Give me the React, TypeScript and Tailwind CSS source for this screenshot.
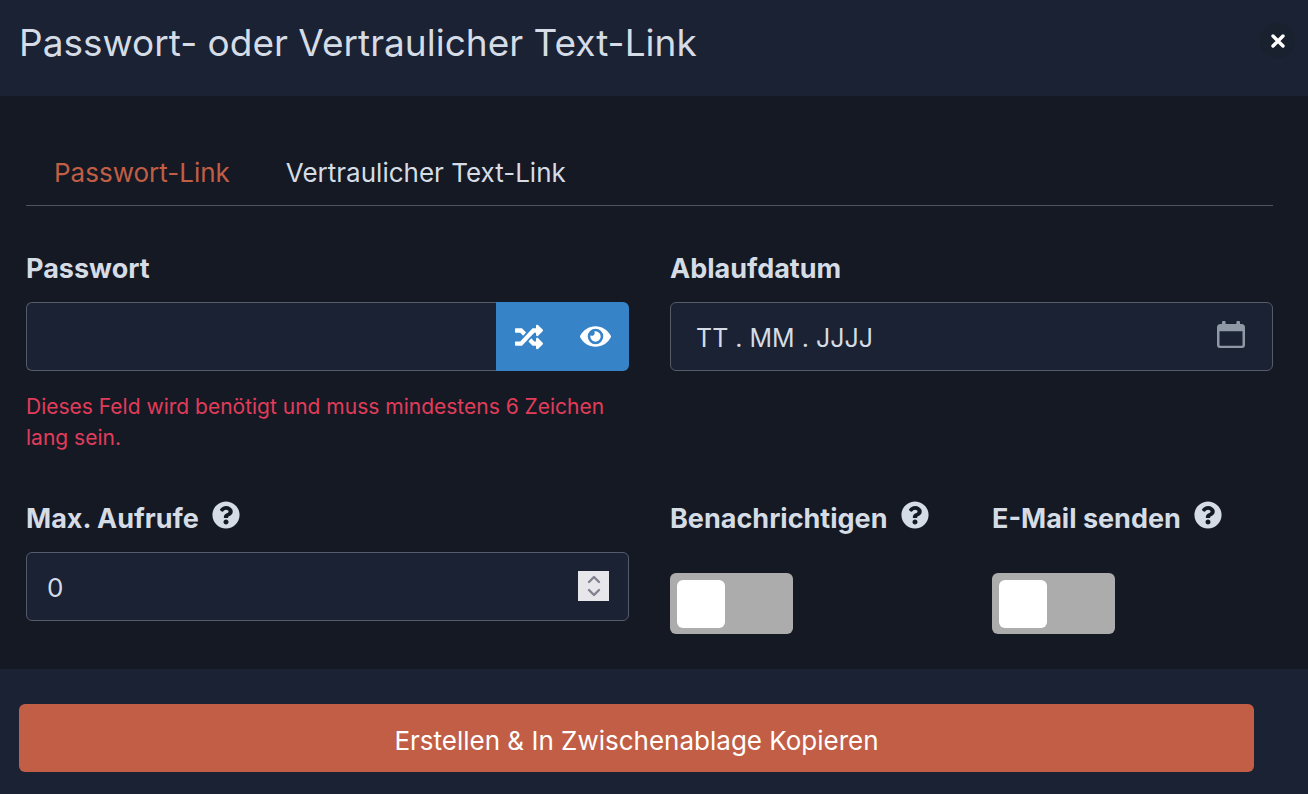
import React, { useState } from 'react'
import { FaEye, FaQuestionCircle, FaRandom } from 'react-icons/fa'

const tabs = [
    { id: 'password', label: 'Passwort-Link' },
    { id: 'text', label: 'Vertraulicher Text-Link' },
]

const CalendarIcon = () => (
    <svg width="28" height="28" viewBox="0 0 28 28" fill="none" aria-hidden="true">
        <path
            fillRule="evenodd"
            clipRule="evenodd"
            d="M5 1.5a1.5 1.5 0 0 1 3.6 0V3h10.8V1.5a1.5 1.5 0 0 1 3.6 0V3h1.5A3.5 3.5 0 0 1 28 6.5V24A3 3 0 0 1 25 27H3A3 3 0 0 1 0 24V6.5A3.5 3.5 0 0 1 3.5 3H5zM2.5 10.300V24a.8.8 0 0 0 .8.8H24.700a.8.8 0 0 0 .8-.8V10.300z"
            fill="#8e99a5"
        />
    </svg>
)

const Help = ({ label }: { label: string }) => (
    <button type="button" aria-label={label} className="text-[#d5dce5]">
        <FaQuestionCircle size={28} />
    </button>
)

const Toggle = ({ id }: { id: string }) => (
    <label className="block w-fit cursor-pointer">
        <input id={id} type="checkbox" role="switch" className="peer sr-only" />
        <span className="flex w-[123px] rounded-md bg-[#acacac] p-[7px] pb-[6px] peer-checked:justify-end peer-checked:bg-[#3783c8]">
            <span className="size-12 rounded-md bg-white" />
        </span>
    </label>
)

const labelClass = 'text-[27px] leading-9 font-bold'
const fieldClass = 'h-[69px] w-full min-w-0 border border-[#555b69] bg-[#1a2234] outline-none'

const App = () => {
    const [active, setActive] = useState('password')

    return (
        <form
            onSubmit={(e) => e.preventDefault()}
            className="min-h-screen bg-[#1a2234] text-[#d5dce5] font-[Inter,'Liberation_Sans',sans-serif]"
        >
            <header className="flex items-start justify-between pt-[19px] pr-[13px] pb-[29px] pl-[19px]">
                <h1 className="text-[37px] leading-12">Passwort- oder Vertraulicher Text-Link</h1>
                <button
                    type="button"
                    aria-label="Schließen"
                    className="mt-1 flex size-[35px] items-center justify-center rounded-full bg-[#19202e] text-white"
                >
                    <svg width="14" height="14" viewBox="0 0 14 14" aria-hidden="true">
                        <path d="M2 2l10 10M12 2L2 12" stroke="currentColor" strokeWidth="3.4" strokeLinecap="round" />
                    </svg>
                </button>
            </header>

            <main className="bg-[#141923] pt-[59px] pr-[35px] pb-[35px] pl-[26px]">
                <div role="tablist" className="flex gap-14 border-b border-[#50545e] px-7 pb-[14px]">
                    {tabs.map((tab) => (
                        <button
                            key={tab.id}
                            type="button"
                            role="tab"
                            aria-selected={active === tab.id}
                            onClick={() => setActive(tab.id)}
                            className={`text-[26px] leading-9 ${active === tab.id ? 'text-[#c15e45]' : ''}`}
                        >
                            {tab.label}
                        </button>
                    ))}
                </div>

                <div className="mt-[45px] grid grid-cols-4 gap-x-[41px]">
                    <div className="col-span-2">
                        <label htmlFor="password" className={labelClass}>Passwort</label>
                        <div className="mt-[15px] flex">
                            <input
                                id="password"
                                type="password"
                                aria-describedby="password-error"
                                className={`${fieldClass} flex-1 rounded-l-md border-r-0 px-5 text-[26px]`}
                            />
                            <div className="flex w-[133px] rounded-r-md bg-[#3783c8] text-white">
                                <button type="button" aria-label="Passwort generieren" className="flex flex-1 items-center justify-center">
                                    <FaRandom size={28} />
                                </button>
                                <button type="button" aria-label="Passwort anzeigen" className="flex flex-1 items-center justify-center">
                                    <FaEye size={31} />
                                </button>
                            </div>
                        </div>
                        <p id="password-error" className="mt-5 pr-4 text-[21px] leading-[31px] text-[#e23c5b]">
                            Dieses Feld wird benötigt und muss mindestens 6 Zeichen lang sein.
                        </p>
                    </div>

                    <div className="col-span-2">
                        <label htmlFor="expires" className={labelClass}>Ablaufdatum</label>
                        <div className="relative mt-[15px]">
                            <input
                                id="expires"
                                type="text"
                                placeholder="TT . MM . JJJJ"
                                className={`${fieldClass} rounded-md px-[25px] pt-[2px] text-[25px] placeholder:text-[#d5dce5]`}
                            />
                            <button type="button" aria-label="Kalender öffnen" className="absolute top-[19px] right-7">
                                <CalendarIcon />
                            </button>
                        </div>
                    </div>

                    <div className="col-span-2 mt-12">
                        <div className="flex items-start gap-[13px]">
                            <label htmlFor="views" className={labelClass}>Max. Aufrufe</label>
                            <Help label="Hilfe zu Max. Aufrufe" />
                        </div>
                        <div className="relative mt-[15px]">
                            <input
                                id="views"
                                type="number"
                                defaultValue={0}
                                className={`${fieldClass} rounded-md px-5 pt-[2px] text-[26px] [appearance:textfield]`}
                            />
                            <span className="absolute top-[19px] right-5 flex h-[30px] w-[31px] items-center justify-center bg-[#e6e6eb]">
                                <svg width="14" height="22" viewBox="0 0 14 22" fill="none" stroke="#83818f" strokeWidth="2.4" strokeLinecap="round" strokeLinejoin="round" aria-hidden="true">
                                    <path d="M2 7l5-5 5 5M2 15l5 5 5-5" />
                                </svg>
                            </span>
                        </div>
                    </div>

                    <div className="mt-12">
                        <div className="mb-9 flex items-start gap-[13px]">
                            <label htmlFor="notify" className={labelClass}>Benachrichtigen</label>
                            <Help label="Hilfe zu Benachrichtigen" />
                        </div>
                        <Toggle id="notify" />
                    </div>

                    <div className="mt-12">
                        <div className="mb-9 flex items-start gap-[13px]">
                            <label htmlFor="mail" className={labelClass}>E-Mail senden</label>
                            <Help label="Hilfe zu E-Mail senden" />
                        </div>
                        <Toggle id="mail" />
                    </div>
                </div>
            </main>

            <footer className="pt-[35px] pr-[54px] pb-[22px] pl-[19px]">
                <button type="submit" className="h-[68px] w-full rounded-md bg-[#c15e45] pt-1 text-[26px] text-white">
                    Erstellen &amp; In Zwischenablage Kopieren
                </button>
            </footer>
        </form>
    )
}

export default App
